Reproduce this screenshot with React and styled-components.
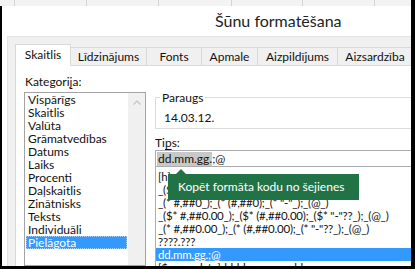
import React from 'react';
import styled, { createGlobalStyle } from 'styled-components';

const FONT = `Lato, "Noto Sans", sans-serif`;

const GlobalStyle = createGlobalStyle`
  html, body { margin: 0; padding: 0; background: #000; }
  body { font-family: ${FONT}; }
`;

const Screen = styled.div`
  width: 415px;
  height: 269px;
  background: #000;
  overflow: hidden;
  display: flex;
  flex-direction: column;
`;

const SheetStrip = styled.div`
  display: flex;
  height: 6px;
  margin-right: 4px;
  background: #f3f3f3;
`;

const SheetCell = styled.div`
  width: ${p => p.w}px;
  flex-shrink: 0;
  box-sizing: border-box;
  border-right: 1px solid #d4d4d4;
`;

const Window = styled.div`
  flex: 1;
  min-height: 0;
  margin: 0 4px 3px 2px;
  background: #fff;
  display: flex;
  flex-direction: column;
  overflow: hidden;
`;

const TitleBar = styled.div`
  height: 30px;
  flex-shrink: 0;
  padding-left: 213px;
  font-size: 16px;
  line-height: 29px;
  color: #222;
  white-space: nowrap;
`;

const Body = styled.div`
  flex: 1;
  min-height: 0;
  margin-left: 5px;
  background: #f0f0f0;
  border-left: 1px solid #e4e4e4;
  border-top: 1px solid #e4e4e4;
  padding: 7px 0 0 7px;
  display: flex;
  flex-direction: column;
`;

const TabRow = styled.div`
  display: flex;
  align-items: flex-end;
  height: 21px;
  position: relative;
  z-index: 1;
`;

const Tab = styled.div`
  width: ${p => p.w}px;
  flex-shrink: 0;
  box-sizing: border-box;
  height: ${p => (p.active ? 22 : 18)}px;
  margin-bottom: ${p => (p.active ? -1 : 0)}px;
  margin-left: ${p => (p.first ? 0 : -1)}px;
  padding-top: ${p => (p.active ? 2 : 1)}px;
  border: 1px solid #d9d9d9;
  border-bottom: none;
  background: ${p => (p.active ? '#fff' : '#f0f0f0')};
  font-size: 12px;
  line-height: 15px;
  color: #111;
  text-align: center;
  white-space: nowrap;
`;

const TabPanel = styled.div`
  flex: 1;
  min-height: 0;
  width: 420px;
  background: #fff;
  border-top: 1px solid #d9d9d9;
  border-left: 1px solid #d9d9d9;
  padding: 8px 0 0 8px;
  display: flex;
  gap: 9px;
`;

const LeftCol = styled.div`
  width: 122px;
  flex-shrink: 0;
  display: flex;
  flex-direction: column;
`;

const RightCol = styled.div`
  flex: 1;
  display: flex;
  flex-direction: column;
`;

const Label = styled.div`
  font-size: 12px;
  line-height: 15px;
  color: #111;
  margin-left: ${p => p.indent || 0}px;
  margin-top: ${p => p.top || 0}px;
  u { text-underline-offset: 2px; }
`;

const ListBox = styled.div`
  margin-top: 3px;
  height: 190px;
  border: 1px solid #a3a3a3;
  display: flex;
`;

const Items = styled.div`
  width: 103px;
  padding: 0 1px;
  box-sizing: border-box;
`;

const Item = styled.div`
  height: 13px;
  line-height: 13px;
  font-size: 12px;
  padding-left: 2px;
  color: ${p => (p.selected ? '#fff' : '#111')};
  background: ${p => (p.selected ? '#3399ff' : 'transparent')};
  outline: ${p => (p.selected ? '1px dotted #a9d3ff' : 'none')};
  outline-offset: -1px;
  white-space: nowrap;
`;

const Scrollbar = styled.div`
  width: 17px;
  background: #f0f0f0;
  display: flex;
  justify-content: center;
  align-items: flex-start;
  padding-top: 7px;
  box-sizing: border-box;
`;

const GroupBox = styled.fieldset`
  margin: 16px 0 0 0;
  padding: 5px 8px 3px 8px;
  border: 1px solid #dcdcdc;
  border-right: none;
  min-width: 0;
`;

const Legend = styled.legend`
  padding: 0 2px;
  margin-left: -4px;
  font-size: 12px;
  line-height: 15px;
  color: #111;
`;

const Sample = styled.div`
  font-size: 12px;
  line-height: 15px;
  color: #111;
`;

const Input = styled.div`
  height: 20px;
  box-sizing: border-box;
  border: 1px solid #abadb3;
  border-right: none;
  padding: 1px 0 0 1px;
  font-size: 12px;
  line-height: 14px;
  color: #111;
  white-space: nowrap;
`;

const Selection = styled.span`
  display: inline-block;
  background: #c8c8c8;
  line-height: 14px;
  padding-left: 1px;
`;

const FormatList = styled.div`
  position: relative;
  height: 120px;
  border-left: 1px solid #abadb3;
  padding-top: 3px;
`;

const FormatRow = styled.div`
  height: 13px;
  line-height: 13px;
  font-size: 11.5px;
  letter-spacing: -0.2px;
  padding-left: 2px;
  color: ${p => (p.selected ? '#fff' : '#111')};
  background: ${p => (p.selected ? '#3399ff' : 'transparent')};
  white-space: nowrap;
`;

const Tooltip = styled.div`
  position: absolute;
  left: 12px;
  top: 7px;
  width: 191px;
  height: 26px;
  box-sizing: border-box;
  padding-left: 10px;
  background: #217346;
  color: #fff;
  font-size: 12px;
  line-height: 26px;
  white-space: nowrap;

  &::before {
    content: '';
    position: absolute;
    left: 8px;
    top: -5px;
    border-left: 5px solid transparent;
    border-right: 5px solid transparent;
    border-bottom: 5px solid #217346;
  }
`;

const tabs = [
  ['Skaitlis', 56],
  ['Līdzinājums', 77],
  ['Fonts', 56],
  ['Apmale', 57],
  ['Aizpildījums', 81],
  ['Aizsardzība', 76],
];

const categories = [
  'Vispārīgs', 'Skaitlis', 'Valūta', 'Grāmatvedības', 'Datums', 'Laiks',
  'Procenti', 'Daļskaitlis', 'Zinātnisks', 'Teksts', 'Individuāli', 'Pielāgota',
];

const formats = [
  '[h]:mm:ss',
  '_($* #,##0_);_($* (#,##0);_($* "-"_);_(@_)',
  '_(* #,##0_);_(* (#,##0);_(* "-"_);_(@_)',
  '_($* #,##0.00_);_($* (#,##0.00);_($* "-"??_);_(@_)',
  '_(* #,##0.00_);_(* (#,##0.00);_(* "-"??_);_(@_)',
  '????.???',
  'dd.mm.gg.;@',
  '[$-x-sysdate]dddd, mmmm dd, yyyy',
];

const ChevronUp = () => (
  <svg width="8" height="5" viewBox="0 0 8 5">
    <polyline points="0.5,4.5 4,1 7.5,4.5" fill="none" stroke="#c2c2c2" strokeWidth="1.2" />
  </svg>
);

export default function App() {
  return (
    <>
      <GlobalStyle />
      <Screen>
        <SheetStrip>
          {[15, 72, 72, 73, 71, 72].map((w, i) => <SheetCell key={i} w={w} />)}
        </SheetStrip>
        <Window>
          <TitleBar>Šūnu formatēšana</TitleBar>
          <Body>
            <TabRow>
              {tabs.map(([name, w], i) => (
                <Tab key={name} w={w} first={i === 0} active={i === 0}>{name}</Tab>
              ))}
            </TabRow>
            <TabPanel>
              <LeftCol>
                <Label indent={1}>Kategori<u>j</u>a:</Label>
                <ListBox>
                  <Items>
                    {categories.map(c => (
                      <Item key={c} selected={c === 'Pielāgota'}>{c}</Item>
                    ))}
                  </Items>
                  <Scrollbar><ChevronUp /></Scrollbar>
                </ListBox>
              </LeftCol>
              <RightCol>
                <GroupBox>
                  <Legend>Paraugs</Legend>
                  <Sample>14.03.12.</Sample>
                </GroupBox>
                <Label top={6}>Ti<u>p</u>s:</Label>
                <Input><Selection>dd.mm.gg.</Selection>;@</Input>
                <FormatList>
                  {formats.map((f, i) => (
                    <FormatRow key={f} selected={i === 6}>{f}</FormatRow>
                  ))}
                  <Tooltip>Kopēt formāta kodu no šejienes</Tooltip>
                </FormatList>
              </RightCol>
            </TabPanel>
          </Body>
        </Window>
      </Screen>
    </>
  );
}
